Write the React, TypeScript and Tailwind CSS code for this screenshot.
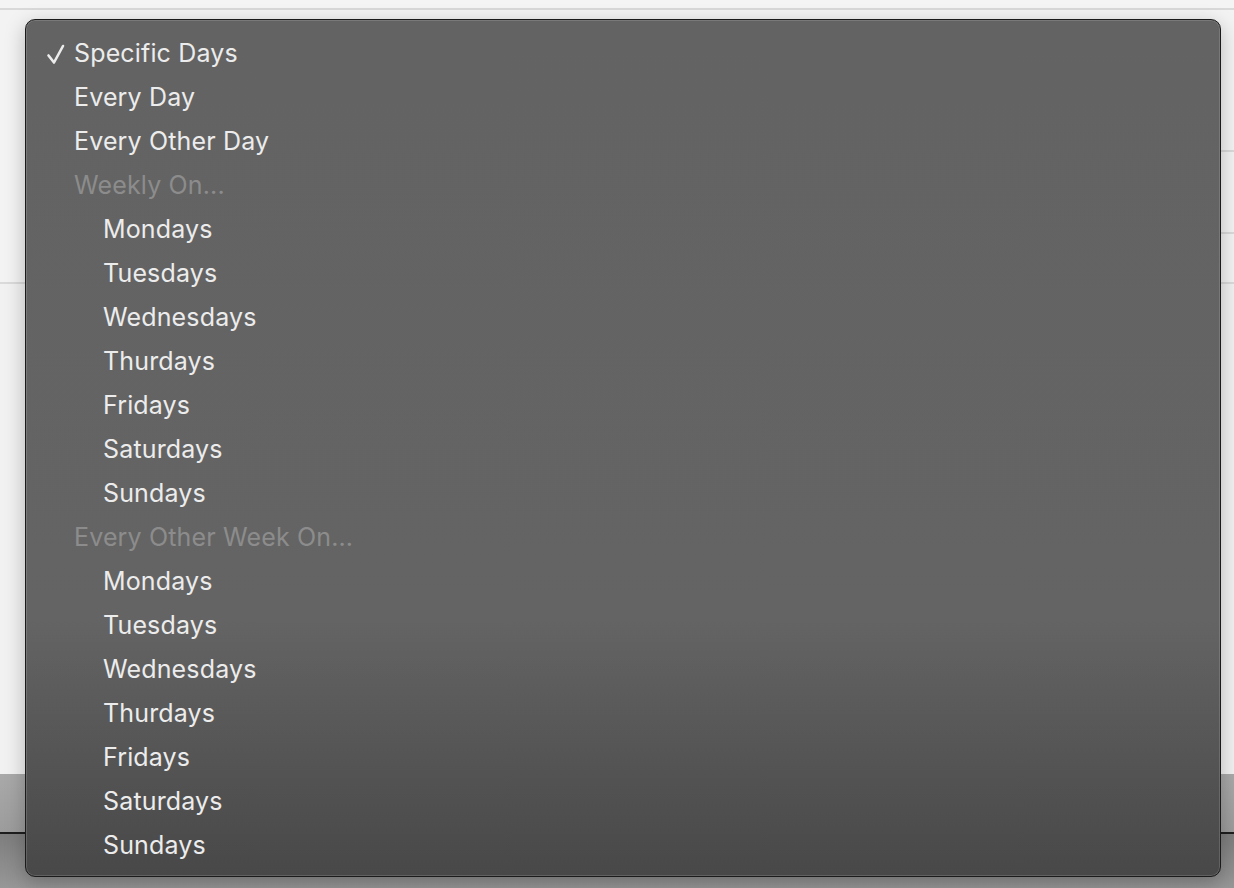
const items: { label: string; kind: "checked" | "item" | "header" | "sub" }[] = [
  { label: "Specific Days", kind: "checked" },
  { label: "Every Day", kind: "item" },
  { label: "Every Other Day", kind: "item" },
  { label: "Weekly On...", kind: "header" },
  { label: "Mondays", kind: "sub" },
  { label: "Tuesdays", kind: "sub" },
  { label: "Wednesdays", kind: "sub" },
  { label: "Thurdays", kind: "sub" },
  { label: "Fridays", kind: "sub" },
  { label: "Saturdays", kind: "sub" },
  { label: "Sundays", kind: "sub" },
  { label: "Every Other Week On...", kind: "header" },
  { label: "Mondays", kind: "sub" },
  { label: "Tuesdays", kind: "sub" },
  { label: "Wednesdays", kind: "sub" },
  { label: "Thurdays", kind: "sub" },
  { label: "Fridays", kind: "sub" },
  { label: "Saturdays", kind: "sub" },
  { label: "Sundays", kind: "sub" },
];

function Check() {
  return (
    <svg width="20" height="22" viewBox="0 0 20 22" className="ml-[20px]">
      <polyline
        points="2.5,12.5 8,19.5 17,3"
        fill="none"
        stroke="#ececec"
        strokeWidth="2.6"
        strokeLinecap="round"
        strokeLinejoin="round"
      />
    </svg>
  );
}

function MenuRow({ label, kind }: (typeof items)[number]) {
  return (
    <div className="flex h-[44px] items-center">
      <span className="flex w-[48px] shrink-0 items-center">
        {kind === "checked" && <Check />}
      </span>
      <span
        className={
          kind === "header"
            ? "text-[25px] tracking-[0.15px] text-[#8c8c8c]"
            : kind === "sub"
              ? "pl-[29px] text-[25px] tracking-[0.15px] text-[#ececec]"
              : "text-[25px] tracking-[0.15px] text-[#ececec]"
        }
      >
        {label}
      </span>
    </div>
  );
}

export default function App() {
  return (
    <div
      className="relative h-[888px] w-[1234px] overflow-hidden bg-[#f3f3f3]"
      style={{ fontFamily: "Inter, 'Noto Sans', 'Liberation Sans', sans-serif" }}
    >
      {/* window behind the menu */}
      <div className="flex h-full flex-col">
        <div className="h-[10px] border-b-2 border-[#d9d9d9] bg-[#f4f4f4]" />
        <div className="flex h-[764px] flex-col">
          <div className="flex h-[142px] justify-end">
            <div className="w-[20px] border-b-2 border-[#dadada]" />
          </div>
          <div className="flex h-[82px] justify-end">
            <div className="w-[20px] border-b-2 border-[#dadada]" />
          </div>
          <div className="h-[50px] border-b-2 border-[#dadada]" />
          <div className="flex-1 bg-[#f1f1f1]" />
        </div>
        <div className="h-[60px] border-b-2 border-[#1e1e1e] bg-linear-to-b from-[#a9a9a9] to-[#9c9c9c]" />
        <div className="flex-1 bg-linear-to-b from-[#7e7e7e] to-[#979797]" />
      </div>

      {/* popup menu */}
      <div className="absolute left-[25px] top-[19px] h-[858px] w-[1196px] rounded-[10px] border border-[#1b1b1b] bg-linear-to-b from-[#636363] via-[#646464] via-70% to-[#484848] pt-[12px] shadow-[inset_0_0_0_1px_rgba(255,255,255,0.14),0_6px_20px_rgba(0,0,0,0.25)]">
        {items.map((it, i) => (
          <MenuRow key={i} {...it} />
        ))}
      </div>
    </div>
  );
}
